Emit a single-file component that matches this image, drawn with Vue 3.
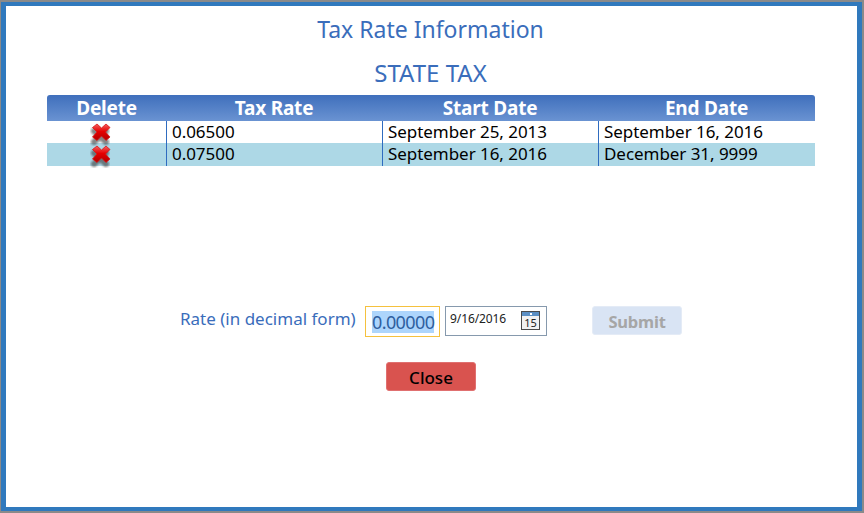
<script setup>
const rows = [
  { rate: '0.06500', start: 'September 25, 2013', end: 'September 16, 2016', alt: false },
  { rate: '0.07500', start: 'September 16, 2016', end: 'December 31, 9999', alt: true },
]
</script>

<template>
  <div class="window">
    <div class="dialog">
      <h1 class="title">Tax Rate Information</h1>
      <h2 class="subtitle">STATE TAX</h2>
      <div class="table">
        <div class="head">
          <div>Delete</div><div>Tax Rate</div><div>Start Date</div><div>End Date</div>
        </div>
        <div v-for="r in rows" :key="r.rate" class="row" :class="{ alt: r.alt }">
          <div class="del">
            <svg class="xicon" width="26" height="26" viewBox="0 0 26 26">
              <defs>
                <linearGradient :id="'x' + r.rate" x1="0" y1="0" x2="0" y2="1">
                  <stop offset="0" stop-color="#f46060" />
                  <stop offset="0.45" stop-color="#e60000" />
                  <stop offset="1" stop-color="#b00000" />
                </linearGradient>
                <filter :id="'b' + r.rate" x="-30%" y="-30%" width="160%" height="160%">
                  <feGaussianBlur stdDeviation="1.300" />
                </filter>
              </defs>
              <path d="M7 8L19 19M19 8L7 19" stroke="#444" stroke-opacity=".65" stroke-width="6" stroke-linecap="round" :filter="'url(#b' + r.rate + ')'" transform="translate(-1 2)" />
              <path d="M4.500 6.500L9 3L13.500 7L18 3L22 6.500L17.500 11L22 16L18 19.500L13.500 15L9 19.500L4.500 16L9 11Z" :fill="'url(#x' + r.rate + ')'" stroke="#d81818" stroke-width="0.800" stroke-linejoin="round" />
            </svg>
          </div>
          <div class="cell">{{ r.rate }}</div>
          <div class="cell">{{ r.start }}</div>
          <div class="cell">{{ r.end }}</div>
        </div>
      </div>
      <div class="form">
        <label class="label">Rate (in decimal form)</label>
        <div class="rate"><span class="sel">0.00000</span></div>
        <div class="date">
          <span class="dtext">9/16/2016</span>
          <svg class="cal" width="20" height="20" viewBox="0 0 20 20">
            <rect x="0.500" y="0.500" width="18" height="18" fill="#f2f2f2" stroke="#4a4a4a" />
            <rect x="1" y="1" width="17" height="4" fill="#5b8fc4" />
            <rect x="9" y="2" width="2" height="2" fill="#fff" />
            <text x="9.500" y="16" text-anchor="middle" class="caltext">15</text>
          </svg>
        </div>
        <button class="submit" disabled>Submit</button>
      </div>
      <div class="closewrap"><button class="close">Close</button></div>
    </div>
  </div>
</template>

<style>
html, body { margin: 0; background: #fff; }
</style>

<style scoped>
.window {
  width: 864px;
  height: 513px;
  box-sizing: border-box;
  border: solid #8a8a8a;
  border-width: 2px 2px 2px 1px;
  overflow: hidden;
  font-family: "Noto Sans", "Open Sans", sans-serif;
}
.dialog {
  box-sizing: border-box;
  height: 100%;
  border: solid #3079bd;
  border-width: 4px 5px 4px 5px;
  background: #fff;
  padding: 7px 43px 0 41px;
}
.title {
  margin: 0;
  font-size: 23px;
  line-height: 32px;
  font-weight: 400;
  color: #3a6dbb;
  text-align: center;
}
.subtitle {
  margin: 12px 0 0;
  font-size: 24px;
  line-height: 32px;
  font-weight: 400;
  color: #3a6dbb;
  text-align: center;
}
.table { margin-top: 6px; width: 768px; }
.head {
  display: grid;
  grid-template-columns: 119px 216px 216px 217px;
  height: 26px;
  background: linear-gradient(#3f6fbc, #6a93d2);
  border-radius: 3px 3px 0 0;
  color: #fff;
  font-size: 19px;
  font-weight: 700;
  line-height: 26px;
  text-align: center;
  letter-spacing: -0.2px;
}
.row {
  display: grid;
  grid-template-columns: 119px 216px 216px 217px;
  height: 22px;
  font-size: 17px;
  line-height: 22px;
  color: #000;
  letter-spacing: -0.05px;
}
.row.alt { background: #add8e6; height: 23px; }
.del { display: flex; justify-content: center; align-items: center; height: 22px; padding: 3px 12px 0 0; box-sizing: border-box; }
.xicon { flex: none; }
.cell { border-left: 1px solid #2f6cc0; padding-left: 5px; }
.form {
  display: flex;
  align-items: flex-start;
  margin-top: 140px;
  padding-left: 133px;
}
.label {
  color: #3a6dbb;
  font-size: 17px;
  line-height: 26px;
  width: 185px;
}
.rate {
  box-sizing: border-box;
  width: 75px;
  height: 31px;
  border: 1px solid #f5c13e;
  padding: 4px 0 0 6px;
  font-size: 18px;
  line-height: 22px;
  color: #2f5f9f;
  letter-spacing: -0.6px;
}
.sel { background: #add5fc; display: inline-block; }
.date {
  box-sizing: border-box;
  width: 102px;
  height: 30px;
  margin-left: 5px;
  border: 1px solid #8699ad;
  position: relative;
  font-size: 12px;
  color: #222;
  padding: 3px 0 0 4px;
}
.dtext { line-height: 16px; letter-spacing: -0.1px; }
.cal { position: absolute; left: 75px; top: 4px; }
.caltext { font-size: 11px; font-family: "Noto Sans", sans-serif; fill: #222; }
.submit {
  width: 90px;
  height: 29px;
  margin-left: 45px;
  border: 1px solid #e4ebf6;
  border-radius: 3px;
  background: #d9e4f4;
  color: #a6a6a6;
  font: 700 16.500px/1 "Noto Sans", sans-serif;
  padding: 3px 0 0;
  letter-spacing: -0.2px;
}
.closewrap { margin-top: 25px; padding-left: 339px; }
.close {
  width: 90px;
  height: 29px;
  border: 1px solid #e07070;
  border-radius: 3px;
  background: #d9534f;
  color: #000;
  font: 500 17px/1 "Noto Sans", sans-serif;
  padding: 2px 0 0;
}
</style>
